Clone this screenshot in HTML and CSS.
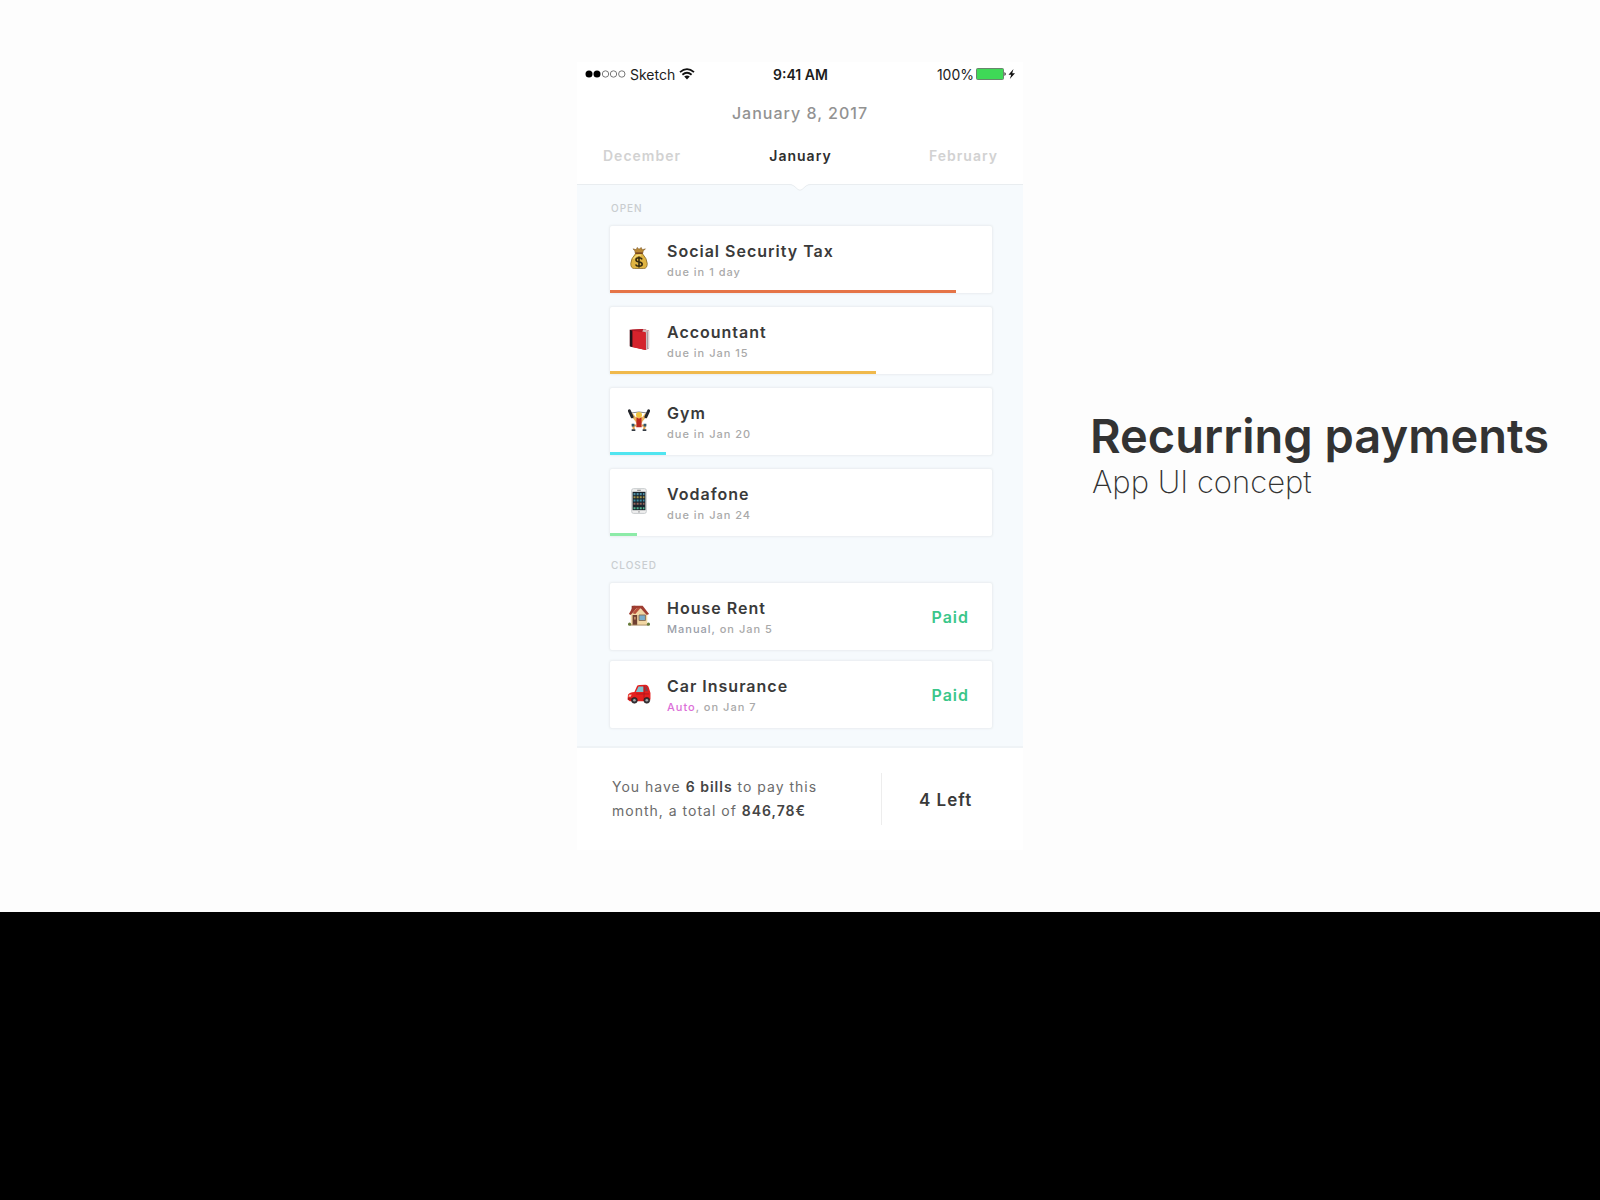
FILE: index.html
```html
<!DOCTYPE html>
<html lang="en">
<head>
<meta charset="utf-8">
<meta name="viewport" content="width=device-width, initial-scale=1">
<title>Recurring payments</title>
<link rel="stylesheet" href="styles.css">
</head>
<body>
<main class="stage">
  <section class="phone">
    <header class="header">
      <div class="status">
        <div class="status-left">
          <svg class="signal" width="41" height="8" viewBox="0 0 41 8" aria-hidden="true">
            <circle cx="4" cy="4" r="3.5"/><circle cx="12" cy="4" r="3.5"/>
            <g fill="none" stroke="#777" stroke-width="1"><circle cx="20.500" cy="4" r="3.200"/><circle cx="28.500" cy="4" r="3.200"/><circle cx="36.800" cy="4" r="3.200"/></g>
          </svg>
          <span>Sketch</span>
          <svg width="16" height="12" viewBox="0 0 16 12" fill="none" stroke="#111" stroke-width="1.800" aria-hidden="true">
            <path d="M1 4.200Q8-2 15 4.200M3.400 6.700Q8 2.700 12.600 6.700"/><path d="M5.200 8.500Q8 6.300 10.800 8.500L8 11.500Z" fill="#111" stroke="none"/>
          </svg>
        </div>
        <strong class="clock">9:41 AM</strong>
        <div class="status-right">
          <span>100%</span>
          <svg width="40" height="14" viewBox="0 0 40 14" aria-hidden="true">
            <rect x=".5" y="1.500" width="27" height="11" rx="1" fill="#3fd957" stroke="#69866d"/>
            <path d="M28.500 5Q31 7 28.500 9Z" fill="#111"/>
            <path d="M37.500 2L32.500 7.800H35.200L33.800 12L39 6.200H36.200Z" fill="#111"/>
          </svg>
        </div>
      </div>
      <p class="date">January 8, 2017</p>
      <nav class="months" aria-label="Months">
        <button class="month" type="button">December</button>
        <button class="month month-current" type="button" aria-current="true">January</button>
        <button class="month month-next" type="button">February</button>
      </nav>
      <svg class="notch" width="22" height="8" viewBox="0 0 22 8" aria-hidden="true"><path d="M0 0Q3 0 5 2L9 5.500Q11 7 13 5.500L17 2Q19 0 22 0Z" fill="#fff"/><path d="M0 .5Q3 .5 5 2L9 5.500Q11 7 13 5.500L17 2Q19 .5 22 .5" fill="none" stroke="#e9edf0"/></svg>
    </header>

    <div class="bills">
      <h2 class="group">OPEN</h2>
      <ul class="list">
        <li class="card">
          <svg class="icon" viewBox="0 0 24 24" aria-hidden="true">
            <path d="M8 7Q8 4 5.500 2L9 3L10 .5L12 2.500L14.500 .5L15.500 3L19 2Q16 4 16 7Z" fill="#b98935" stroke="#79521d" stroke-width=".6"/>
            <path d="M8.500 7H15.500Q21 13 21 18Q21 23.500 17 23.500H7Q3 23.500 3 18Q3 13 8.500 7Z" fill="#dfb442" stroke="#80601f" stroke-width=".8"/>
            <path d="M6 13Q9 8 14 9" fill="none" stroke="#f5dc7d" stroke-width="1.500"/>
            <path d="M8 6.700H16" stroke="#74401e" stroke-width="1.500"/>
            <path d="M15.500 13.500Q14.500 11.800 12 11.800Q8.700 11.800 8.700 14Q8.700 16 12 16.300Q15.500 16.600 15.500 18.800Q15.500 21 12 21Q9 21 8.300 19M12 10.300V22.400" fill="none" stroke="#33290f" stroke-width="1.700"/>
          </svg>
          <div class="info"><h3 class="name">Social Security Tax</h3><p class="due">due in 1 day</p></div>
          <div class="bar bar-orange" style="width:90.6%"></div>
        </li>
        <li class="card">
          <svg class="icon" viewBox="0 0 24 24" aria-hidden="true">
            <path d="M2 2L17 1L23 3V22L19 24L2 20Z" fill="#a51621"/>
            <path d="M19 4L23 3V22L19.500 24Z" fill="#d9cfd0"/><path d="M21 4V23" stroke="#77636a" stroke-width=".7"/>
            <path d="M2 2L5 3V21L2 20Z" fill="#21151a"/><path d="M5 3L19.500 4.500V24L5 21Z" fill="#d4232c"/>
            <path d="M3 2L17 1L22 3L19.500 4.500Z" fill="#b91c28"/><path d="M17 1L23 3L19.500 4.500L15.500 3.800Z" fill="#d6b9ba"/>
          </svg>
          <div class="info"><h3 class="name">Accountant</h3><p class="due">due in Jan 15</p></div>
          <div class="bar bar-yellow" style="width:69.6%"></div>
        </li>
        <li class="card">
          <svg class="icon" viewBox="0 0 24 24" aria-hidden="true">
            <path d="M2 4.500Q12 2 22 4.500" fill="none" stroke="#777" stroke-width="1"/>
            <path d="M4 6L9 12M20 6L15 12" stroke="#e8b35e" stroke-width="3.200" stroke-linecap="round"/>
            <path d="M1.500 2L4.500 8.500M22.500 2L19.500 8.500" stroke="#24262c" stroke-width="3.200" stroke-linecap="round"/>
            <circle cx="12" cy="6.500" r="3.300" fill="#f0c33d"/><path d="M8 9H16L15.500 15H8.500Z" fill="#eeb45c"/>
            <path d="M9.300 9L12 10.500L14.700 9L15 20H9Z" fill="#bb281e"/>
            <path d="M9 18L5.500 18L6.500 22M15 18L18.500 18L17.500 22" fill="none" stroke="#dfa04e" stroke-width="2.300"/>
            <path d="M4 17.500H7M17 17.500H20" stroke="#30566c" stroke-width="3"/><path d="M4 23H8M16 23H20" stroke="#343b43" stroke-width="2"/>
          </svg>
          <div class="info"><h3 class="name">Gym</h3><p class="due">due in Jan 20</p></div>
          <div class="bar bar-cyan" style="width:14.7%"></div>
        </li>
        <li class="card">
          <svg class="icon icon-tall" viewBox="0 0 24 28" aria-hidden="true">
            <rect x="4" y=".5" width="16" height="27" rx="2" fill="#eee" stroke="#c4c8ca"/>
            <rect x="5" y="4" width="14" height="20" fill="#19242d"/><path d="M10 2.300H14" stroke="#777"/>
            <g fill="none" stroke-width="2.200" stroke-dasharray="2.200 1.200"><path d="M6 6.500H18" stroke="#4b8ba1"/><path d="M6 10H18" stroke="#a39248"/><path d="M6 13.500H18" stroke="#398ca3"/><path d="M6 17H18" stroke="#93635b"/><path d="M6 22H18" stroke="#53b590"/></g>
            <circle cx="12" cy="25.800" r="1" fill="#aaa"/>
          </svg>
          <div class="info"><h3 class="name">Vodafone</h3><p class="due">due in Jan 24</p></div>
          <div class="bar bar-green" style="width:7%"></div>
        </li>
      </ul>
      <h2 class="group group-closed">CLOSED</h2>
      <ul class="list list-closed">
        <li class="card">
          <svg class="icon" viewBox="0 0 24 24" aria-hidden="true">
            <path d="M4 2H8V8H4Z" fill="#8b3a2e"/><path d="M3 12L8 5L16 6L21 12V23H3Z" fill="#f2d7a4"/>
            <path d="M1 11L6 2H16L23 11L20.500 12L14 5L9 5L3 12Z" fill="#9f3d31"/><path d="M5 10L10 4L14 4L8 11Z" fill="#b8503b"/>
            <path d="M5 12H10V23H5Z" fill="#704032"/><path d="M6.500 14H8.500V17H6.500Z" fill="#c18b65"/>
            <path d="M12 12H19V18H12Z" fill="#79adcb" stroke="#876b53"/><path d="M2 23H22" stroke="#a88960"/>
            <circle cx="1.700" cy="22" r="1.700" fill="#667a39"/><circle cx="22.300" cy="22" r="1.700" fill="#667a39"/>
          </svg>
          <div class="info"><h3 class="name">House Rent</h3><p class="due"><span class="manual">Manual,</span> on Jan 5</p></div>
          <strong class="paid">Paid</strong>
        </li>
        <li class="card">
          <svg class="icon icon-wide" viewBox="0 0 26 24" aria-hidden="true">
            <path d="M1 14Q3 11 8 11L11 4Q12 3 20 3Q23 3 24 7L25.500 12V19L23 21H3L.5 19Z" fill="#e4201f"/>
            <path d="M9.500 11L12.500 5H18V11Z" fill="#7cc3cf"/><path d="M19.500 5H21.500L23 10H19.500Z" fill="#923a45"/>
            <path d="M10 13H24M18.500 4V19" stroke="#a81318" stroke-width=".8"/><path d="M2 14L5 13.500L4 16H1.500Z" fill="#efc8b0"/>
            <path d="M1 18.500H8" stroke="#751c22"/>
            <g fill="#33353a" stroke="#211" stroke-width=".6"><circle cx="8" cy="20" r="3.200"/><circle cx="21.500" cy="20" r="3.200"/></g>
            <g fill="#aaa"><circle cx="8" cy="20" r="1.400"/><circle cx="21.500" cy="20" r="1.400"/></g>
          </svg>
          <div class="info"><h3 class="name">Car Insurance</h3><p class="due"><span class="auto">Auto</span>, on Jan 7</p></div>
          <strong class="paid">Paid</strong>
        </li>
      </ul>
    </div>

    <footer class="summary">
      <p class="total">You have <b>6 bills</b> to pay this<br>month, a total of <b>846,78€</b></p>
      <strong class="left">4 Left</strong>
    </footer>
  </section>

  <div class="caption">
    <h1 class="title">Recurring payments</h1>
    <p class="subtitle">App UI concept</p>
  </div>
</main>
</body>
</html>
```
FILE: styles.css
```css
* { box-sizing: border-box; }
body, h1, h2, h3, p, ul { margin: 0; padding: 0; }
ul { list-style: none; }
body {
  background: #000;
  color: #3a3a3a;
  font-family: Inter, "Liberation Sans", sans-serif;
}
.stage {
  display: grid;
  grid-template-columns: 1fr minmax(0, 446px) 1fr;
  align-items: center;
  padding: 62px 0;
  background: #fdfdfd;
}
.phone { grid-column: 2; background: #fff; }

.header { position: relative; border-bottom: 1px solid #e9edf0; background: #fff; }
.status {
  display: grid;
  grid-template-columns: 1fr auto 1fr;
  align-items: center;
  height: 24px;
  padding: 0 7px 0 8px;
  color: #1c1c1c;
  font-size: 14px;
}
.status-left, .status-right { display: flex; align-items: center; gap: 4px; }
.status-right { justify-content: flex-end; gap: 2px; }
.clock { font-weight: 600; }
.date {
  padding-top: 15px;
  color: #929292;
  font-size: 16px;
  font-weight: 500;
  line-height: 24px;
  letter-spacing: 1px;
  text-align: center;
}
.months {
  display: grid;
  grid-template-columns: 1fr auto 1fr;
  padding: 19px 25px 16px 26px;
}
.month {
  padding: 0;
  border: 0;
  background: none;
  color: #d2d2d2;
  font: 600 14px/24px Inter, "Liberation Sans", sans-serif;
  letter-spacing: 1px;
  text-align: left;
  cursor: pointer;
}
.month-current { color: #2e2e2e; text-align: center; }
.month-next { text-align: right; }
.notch { position: absolute; left: 50%; bottom: -8px; margin-left: -11px; }

.bills {
  padding: 13px 31px 18px 33px;
  border-bottom: 2px solid #eff3f6;
  background: #f6fafd;
}
.group {
  padding-left: 1px;
  color: #c9cdd0;
  font-size: 10px;
  font-weight: 500;
  line-height: 20px;
  letter-spacing: 1px;
}
.group-closed { margin-top: 19px; }
.list { display: grid; gap: 14px; padding-top: 8px; }
.list-closed { gap: 11px; }
.card {
  position: relative;
  display: flex;
  gap: 17px;
  padding: 0 23px 0 18px;
  border-radius: 2px;
  background: #fff;
  box-shadow: 0 0 2px 1px #e9edf0;
}
.icon { flex: none; width: 22px; height: 22px; margin-top: 21px; }
.icon-tall { height: 28px; margin-top: 18px; }
.icon-wide { width: 24px; margin: 21px -1px 0; }
.info { flex: 1; padding: 15px 0 10px; }
.name { font-size: 16px; font-weight: 600; line-height: 20px; letter-spacing: 1px; }
.due { color: #a9a9a9; font-size: 11px; font-weight: 500; line-height: 22px; letter-spacing: 1px; }
.manual { color: #9a9ea8; }
.auto { color: #dc6fd8; }
.paid { align-self: center; color: #3bc68a; font-size: 16px; font-weight: 600; letter-spacing: 1px; }
.bar { position: absolute; left: 0; bottom: 0; height: 3px; }
.bar-orange { background: #e57447; }
.bar-yellow { background: #f0b94c; }
.bar-cyan { background: #51e5f0; }
.bar-green { background: #8deba8; }

.summary { display: grid; grid-template-columns: 1fr 142px; align-items: center; padding: 25px 0; }
.total { padding-left: 35px; color: #6b6b6b; font-size: 14px; line-height: 24px; letter-spacing: 1px; }
.total b { color: #444; font-weight: 600; }
.left {
  padding: 15px 0 13px 37px;
  border-left: 1px solid #ededed;
  font-size: 17px;
  font-weight: 600;
  line-height: 24px;
  letter-spacing: 1px;
}

.caption { padding: 0 0 4px 67px; color: #333; white-space: nowrap; }
.title { font-size: 47px; font-weight: 600; line-height: 56px; }
.subtitle { padding-left: 2px; font-size: 31px; font-weight: 200; line-height: 36px; }
```
